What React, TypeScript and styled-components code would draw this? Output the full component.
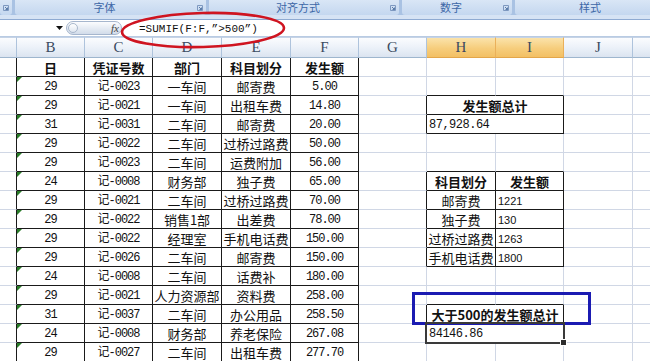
import React from "react";
import styled, { createGlobalStyle, css } from "styled-components";

const GlobalStyle = createGlobalStyle`
  html, body {
    margin: 0;
    padding: 0;
    background: #fff;
  }
  body {
    font-family: "Noto Sans CJK SC", "Liberation Sans", sans-serif;
  }
`;

// column widths incl. right border: A(cut) B C D E F G H I J K(cut)
const COLS = [17, 68, 68, 69, 69, 68, 68, 69, 68, 69, 30];
const LETTERS = ["", "B", "C", "D", "E", "F", "G", "H", "I", "J", ""];
const ACTIVE = [7, 8];
const GRID = "#d0d7e5";
const INK = "#1a1a1a";

type Font = "cjk" | "num" | "mono" | "sans";

type CellData = {
  c?: number;
  text?: string;
  span?: number;
  bold?: boolean;
  align?: "left" | "center";
  font?: Font;
  flag?: boolean;
};

const ledger = [
  ["日", "凭证号数", "部门", "科目划分", "发生额"],
  ["29", "记-0023", "一车间", "邮寄费", "5.00"],
  ["29", "记-0021", "一车间", "出租车费", "14.80"],
  ["31", "记-0031", "二车间", "邮寄费", "20.00"],
  ["29", "记-0022", "二车间", "过桥过路费", "50.00"],
  ["29", "记-0023", "二车间", "运费附加", "56.00"],
  ["24", "记-0008", "财务部", "独子费", "65.00"],
  ["29", "记-0021", "二车间", "过桥过路费", "70.00"],
  ["29", "记-0022", "销售1部", "出差费", "78.00"],
  ["29", "记-0022", "经理室", "手机电话费", "150.00"],
  ["29", "记-0026", "二车间", "邮寄费", "150.00"],
  ["24", "记-0008", "二车间", "话费补", "180.00"],
  ["29", "记-0021", "人力资源部", "资料费", "258.00"],
  ["31", "记-0037", "二车间", "办公用品", "258.50"],
  ["24", "记-0008", "财务部", "养老保险", "267.08"],
  ["29", "记-0027", "二车间", "出租车费", "277.70"],
];

const side: Record<number, CellData[]> = {
  2: [{ text: "发生额总计", span: 2, bold: true }],
  3: [{ text: "87,928.64", span: 2, align: "left", font: "mono" }],
  6: [
    { text: "科目划分", bold: true },
    { text: "发生额", bold: true },
  ],
  7: [{ text: "邮寄费" }, { text: "1221", align: "left", font: "sans" }],
  8: [{ text: "独子费" }, { text: "130", align: "left", font: "sans" }],
  9: [{ text: "过桥过路费" }, { text: "1263", align: "left", font: "sans" }],
  10: [{ text: "手机电话费" }, { text: "1800", align: "left", font: "sans" }],
  13: [{ text: "大于500的发生额总计", span: 2, bold: true }],
  14: [{ text: "84146.86", span: 2, align: "left", font: "mono" }],
};

const boxed = (r: number, c: number) =>
  (c >= 1 && c <= 5 && r >= 0 && r < ledger.length) ||
  ((c === 7 || c === 8) && side[r] !== undefined);

const buildRow = (r: number): CellData[] => {
  const cells: CellData[] = [{ c: 0 }];
  ledger[r].forEach((t, i) =>
    cells.push({
      c: i + 1,
      text: t,
      bold: r === 0,
      font: r > 0 && (i === 0 || i === 1 || i === 4) ? "num" : "cjk",
      flag: r > 0 && i === 0,
    })
  );
  cells.push({ c: 6 });
  const s = side[r];
  if (s) {
    let c = 7;
    s.forEach((d) => {
      cells.push({ ...d, c });
      c += d.span ?? 1;
    });
  } else {
    cells.push({ c: 7 }, { c: 8 });
  }
  cells.push({ c: 9 }, { c: 10 });
  return cells;
};

const fonts: Record<Font, ReturnType<typeof css>> = {
  cjk: css`
    font-family: "Noto Sans CJK SC", sans-serif;
    font-size: 13px;
    line-height: 17px;
  `,
  num: css`
    font-family: "Liberation Mono", "Noto Sans CJK SC", monospace;
    font-size: 12px;
    letter-spacing: -1px;
    line-height: 17px;
    padding-top: 3px;
  `,
  mono: css`
    font-family: "Liberation Mono", monospace;
    font-size: 12px;
    letter-spacing: -0.5px;
    line-height: 17px;
    padding-top: 3px;
  `,
  sans: css`
    font-family: "Liberation Sans", sans-serif;
    font-size: 11px;
    line-height: 17px;
    padding-top: 3px;
  `,
};

const Screen = styled.div`
  position: relative;
  width: 650px;
  height: 361px;
  overflow: hidden;
  background: #fff;
`;

const Ribbon = styled.div`
  display: flex;
  gap: 3px;
  height: 15px;
  background: #a9c2e3;
  overflow: hidden;
`;

const Group = styled.div<{ $w: number }>`
  flex: none;
  width: ${(p) => p.$w}px;
  display: flex;
  align-items: center;
  background: linear-gradient(#d9e6f6, #c4d7ef);
  border-radius: 0 0 3px 3px;
  color: #3d67a7;
  font-size: 11px;
  line-height: 15px;
`;

const GroupLabel = styled.span`
  flex: 1;
  text-align: center;
`;

const Launcher = styled.svg`
  flex: none;
  margin: 0 3px;
`;

const Band = styled.div`
  height: 4px;
  background: #d6e3f4;
  border-bottom: 1px solid #8eaad2;
`;

const FormulaBar = styled.div`
  display: flex;
  align-items: center;
  height: 16px;
  background: #fff;
  border-bottom: 1px solid #b9cbe3;
`;

const NameBox = styled.div`
  flex: none;
  width: 66px;
  display: flex;
  justify-content: flex-end;
  padding-right: 3px;
  box-sizing: border-box;
`;

const Knob = styled.div`
  flex: none;
  box-sizing: border-box;
  width: 56px;
  height: 14px;
  border: 1px solid #a6b6cd;
  border-radius: 7px;
  background: linear-gradient(#fbfcfe, #d2dcea);
  display: flex;
  align-items: center;
  justify-content: space-between;
  padding: 0 2px 0 1px;
`;

const KnobDot = styled.span`
  width: 10px;
  height: 10px;
  border-radius: 50%;
  border: 1px solid #a9b8cd;
  box-sizing: border-box;
  background: linear-gradient(#ffffff, #dfe6f0);
`;

const Fx = styled.span`
  font-family: "Liberation Serif", serif;
  font-style: italic;
  font-size: 11px;
  color: #444;
`;

const Formula = styled.div`
  flex: 1;
  padding: 2px 0 0 17px;
  font-family: "Liberation Mono", monospace;
  font-size: 11px;
  color: #111;
  white-space: nowrap;
`;

const HeaderRow = styled.div`
  display: flex;
  height: 21px;
`;

const ColHead = styled.div<{ $w: number; $active: boolean }>`
  flex: none;
  box-sizing: border-box;
  width: ${(p) => p.$w}px;
  height: 21px;
  display: flex;
  align-items: center;
  justify-content: center;
  font-family: "Liberation Serif", serif;
  font-size: 15px;
  color: #3a4a60;
  border-top: 1px solid #c5d3e6;
  border-right: 1px solid ${(p) => (p.$active ? "#eab05a" : "#aec3dc")};
  border-bottom: 1px solid ${(p) => (p.$active ? "#e3a64a" : "#9eb6ce")};
  background: ${(p) =>
    p.$active
      ? "linear-gradient(#fbe3ab, #f6cd7c 55%, #f3c064)"
      : "linear-gradient(#fbfcfe, #eaf0f8 55%, #dbe4f0)"};
`;

const Row = styled.div`
  display: flex;
  height: 19px;
`;

const Cell = styled.div<{
  $w: number;
  $right: string;
  $bottom: string;
  $align: "left" | "center";
  $bold: boolean;
  $font: Font;
  $flag: boolean;
}>`
  position: relative;
  flex: none;
  box-sizing: border-box;
  width: ${(p) => p.$w}px;
  height: 19px;
  border-right: 1px solid ${(p) => p.$right};
  border-bottom: 1px solid ${(p) => p.$bottom};
  display: flex;
  align-items: center;
  justify-content: ${(p) => (p.$align === "left" ? "flex-start" : "center")};
  padding: 1px 2px 0;
  white-space: nowrap;
  overflow: hidden;
  color: #111;
  font-weight: ${(p) => (p.$bold ? 700 : 400)};
  ${(p) => fonts[p.$font]}
  ${(p) =>
    p.$flag &&
    css`
      &::before {
        content: "";
        position: absolute;
        left: 0;
        top: 0;
        border-top: 5px solid #2a7d2a;
        border-right: 5px solid transparent;
      }
    `}
`;

const Ellipse = styled.svg`
  position: absolute;
  left: 118px;
  top: 10px;
`;

const BlueMark = styled.div`
  position: absolute;
  left: 412px;
  top: 292px;
  width: 179px;
  height: 33px;
  box-sizing: border-box;
  border: 3px solid #1b1bb2;
`;

const Selection = styled.div`
  position: absolute;
  left: 425px;
  top: 322px;
  width: 140px;
  height: 22px;
  box-sizing: border-box;
  border: 2px solid #3a3a3a;

  &::after {
    content: "";
    position: absolute;
    right: -4px;
    bottom: -4px;
    width: 5px;
    height: 5px;
    background: #2c2c2c;
    border: 1px solid #fff;
  }
`;

const LauncherIcon = () => (
  <Launcher width="6" height="6" viewBox="0 0 6 6">
    <path d="M0.5 0.5h5v5h-5z" fill="none" stroke="#7d98c0" strokeWidth="1" />
    <path d="M2 2l2.5 2.5M4.5 2.5v2h-2" fill="none" stroke="#4d6f9f" strokeWidth="0.9" />
  </Launcher>
);

const groups = [
  { w: 12, label: "" },
  { w: 191, label: "字体" },
  { w: 190, label: "对齐方式" },
  { w: 110, label: "数字" },
  { w: 150, label: "样式", noLauncher: true },
];

const App = () => {
  const rows = ledger.map((_, r) => buildRow(r));

  return (
    <Screen>
      <GlobalStyle />
      <Ribbon>
        {groups.map((g, i) => (
          <Group key={i} $w={g.w}>
            <GroupLabel>{g.label}</GroupLabel>
            {!g.noLauncher && <LauncherIcon />}
          </Group>
        ))}
      </Ribbon>
      <Band />
      <FormulaBar>
        <NameBox>
          <svg width="7" height="4" viewBox="0 0 7 4">
            <path d="M0 0h7L3.5 4z" fill="#111" />
          </svg>
        </NameBox>
        <Knob>
          <KnobDot />
          <Fx>fx</Fx>
        </Knob>
        <Formula>=SUMIF(F:F,”&gt;500”)</Formula>
      </FormulaBar>
      <HeaderRow>
        {COLS.map((w, c) => (
          <ColHead key={c} $w={w} $active={ACTIVE.includes(c)}>
            {LETTERS[c]}
          </ColHead>
        ))}
      </HeaderRow>
      {rows.map((cells, r) => (
        <Row key={r}>
          {cells.map((d) => {
            const c = d.c ?? 0;
            const span = d.span ?? 1;
            const last = c + span - 1;
            let w = 0;
            let bottom = false;
            for (let k = c; k <= last; k++) {
              w += COLS[k];
              if (boxed(r, k) || boxed(r + 1, k)) bottom = true;
            }
            const right = boxed(r, last) || boxed(r, last + 1);
            return (
              <Cell
                key={c}
                $w={w}
                $right={right ? INK : GRID}
                $bottom={bottom ? INK : GRID}
                $align={d.align ?? "center"}
                $bold={!!d.bold}
                $font={d.font ?? "cjk"}
                $flag={!!d.flag}
              >
                {d.text}
              </Cell>
            );
          })}
        </Row>
      ))}
      <Ellipse width="172" height="40" viewBox="0 0 172 40">
        <ellipse
          cx="85"
          cy="20"
          rx="81"
          ry="17"
          fill="none"
          stroke="#cf1420"
          strokeWidth="2.6"
          transform="rotate(-1.5 85 20)"
        />
      </Ellipse>
      <BlueMark />
      <Selection />
    </Screen>
  );
};

export default App;
